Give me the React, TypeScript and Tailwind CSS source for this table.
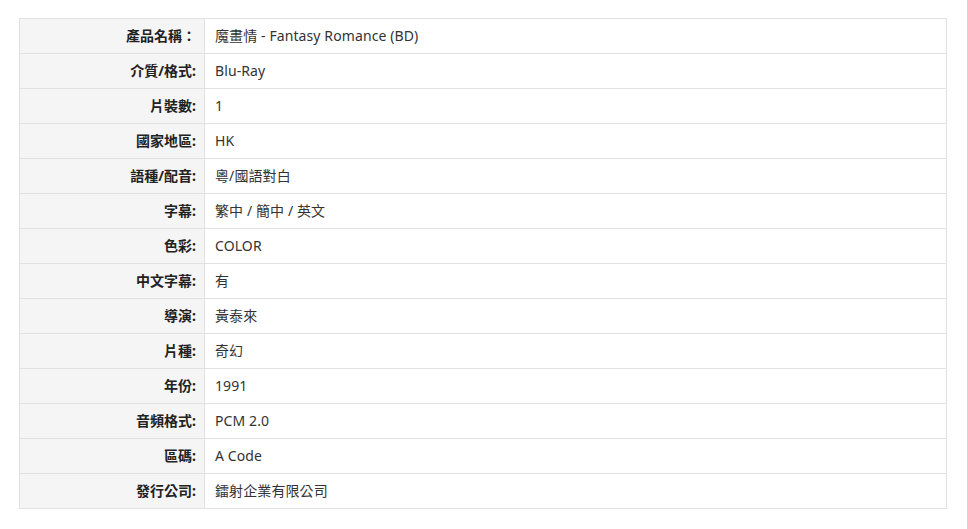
const rows: [string, string][] = [
  ["產品名稱：", "魔畫情 - Fantasy Romance (BD)"],
  ["介質/格式:", "Blu-Ray"],
  ["片裝數:", "1"],
  ["國家地區:", "HK"],
  ["語種/配音:", "粵/國語對白"],
  ["字幕:", "繁中 / 簡中 / 英文"],
  ["色彩:", "COLOR"],
  ["中文字幕:", "有"],
  ["導演:", "黃泰來"],
  ["片種:", "奇幻"],
  ["年份:", "1991"],
  ["音頻格式:", "PCM 2.0"],
  ["區碼:", "A Code"],
  ["發行公司:", "鐳射企業有限公司"],
];

export default function App() {
  return (
    <div
      className="w-[968px] h-[529px] bg-white border-r border-[#d4d4d4] pt-[18px] pl-[19px] text-[14px] text-[#333]"
      style={{ fontFamily: '"Segoe UI", "Noto Sans", "Noto Sans CJK TC", sans-serif' }}
    >
      <table className="w-[928px] border-collapse border border-[#e2e2e2]">
        <tbody>
          {rows.map(([label, value], i) => (
            <tr key={i} className="h-[35px]">
              <td className="w-[185px] bg-[#f5f5f5] border border-[#e2e2e2] text-right font-bold text-[#222] p-0 pr-[8px] pb-[2px]">
                {label}
              </td>
              <td className="border border-[#e2e2e2] p-0 pl-[10px] pb-[2px] tracking-[0.1px]">{value}</td>
            </tr>
          ))}
        </tbody>
      </table>
    </div>
  );
}
